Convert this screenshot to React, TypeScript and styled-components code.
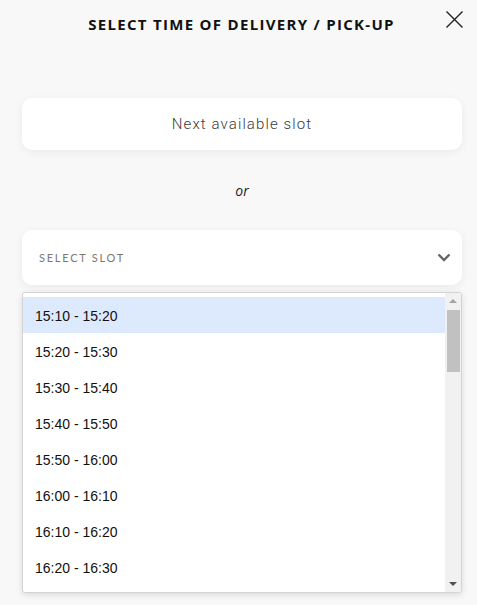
import React from 'react';
import styled, { createGlobalStyle } from 'styled-components';

const GlobalStyle = createGlobalStyle`
  html, body {
    margin: 0;
    padding: 0;
    background: #f8f8f8;
  }
  * {
    box-sizing: border-box;
  }
`;

const Page = styled.div`
  width: 477px;
  height: 605px;
  padding: 0 15px 0 22px;
  font-family: 'Open Sans', 'Liberation Sans', sans-serif;
  overflow: hidden;
`;

const Header = styled.header`
  position: relative;
  height: 46px;
  display: flex;
  align-items: center;
  justify-content: center;
  padding-right: 1px;
  padding-top: 1px;
`;

const Title = styled.h1`
  margin: 0;
  font-family: 'Open Sans', sans-serif;
  font-size: 15px;
  font-weight: 700;
  letter-spacing: 1.3px;
  color: #111;
  text-transform: uppercase;
`;

const CloseButton = styled.button`
  position: absolute;
  right: -2px;
  top: 10px;
  width: 19px;
  height: 19px;
  padding: 0;
  border: none;
  background: none;
  cursor: pointer;
  display: flex;
`;

const Content = styled.main`
  width: 440px;
  padding-top: 52px;
  display: flex;
  flex-direction: column;
`;

const Card = styled.div`
  background: #fff;
  border-radius: 10px;
  box-shadow: 0 2px 10px rgba(0, 0, 0, 0.06);
`;

const NextSlot = styled(Card)`
  height: 52px;
  display: flex;
  align-items: center;
  justify-content: center;
  font-family: Roboto, sans-serif;
  font-weight: 300;
  font-size: 15px;
  letter-spacing: 1.1px;
  color: #3a3a3a;
`;

const Or = styled.div`
  height: 80px;
  display: flex;
  align-items: center;
  justify-content: center;
  font-family: 'Open Sans', sans-serif;
  font-style: italic;
  font-size: 14px;
  color: #222;
`;

const SelectBox = styled(Card)`
  height: 55px;
  display: flex;
  align-items: center;
  justify-content: space-between;
  padding: 0 11px 0 17px;
`;

const SelectLabel = styled.span`
  font-family: Lato, sans-serif;
  font-size: 11px;
  letter-spacing: 1.75px;
  color: #7d7772;
  text-transform: uppercase;
`;

const ListBox = styled.div`
  margin-top: 7px;
  height: 301px;
  background: #fff;
  border: 1px solid #d4d4d4;
  border-radius: 3px;
  box-shadow: 0 2px 6px rgba(0, 0, 0, 0.12);
  display: flex;
  overflow: hidden;
`;

const Options = styled.ul`
  flex: 1;
  list-style: none;
  margin: 0;
  padding: 4px 0 0;
  overflow: hidden;
`;

const Option = styled.li<{ $active?: boolean }>`
  height: 36px;
  display: flex;
  align-items: center;
  padding: 2px 0 0 12px;
  font-family: 'Liberation Sans', Arial, sans-serif;
  font-size: 14px;
  color: #111;
  background: ${(p) => (p.$active ? '#dde9fc' : 'transparent')};
`;

const Scrollbar = styled.div`
  width: 16px;
  background: #f1f1f1;
  display: flex;
  flex-direction: column;
  align-items: center;
`;

const ArrowButton = styled.div`
  height: 16px;
  width: 100%;
  display: flex;
  align-items: center;
  justify-content: center;
`;

const Thumb = styled.div`
  width: 13px;
  height: 62px;
  margin-top: 1px;
  background: #c1c1c1;
`;

const Track = styled.div`
  flex: 1;
`;

const slots = [
  '15:10 - 15:20',
  '15:20 - 15:30',
  '15:30 - 15:40',
  '15:40 - 15:50',
  '15:50 - 16:00',
  '16:00 - 16:10',
  '16:10 - 16:20',
  '16:20 - 16:30',
];

const Triangle = ({ up }: { up?: boolean }) => (
  <svg width="8" height="4" viewBox="0 0 8 4">
    <path d={up ? 'M0 4 L4 0 L8 4 Z' : 'M0 0 L8 0 L4 4 Z'} fill={up ? '#a3a3a3' : '#505050'} />
  </svg>
);

export default function App() {
  return (
    <Page>
      <GlobalStyle />
      <Header>
        <Title>Select time of delivery / pick-up</Title>
        <CloseButton aria-label="Close">
          <svg width="19" height="19" viewBox="0 0 19 19">
            <path d="M1.5 1.5 L17.5 17.5 M17.5 1.5 L1.5 17.5" stroke="#222" strokeWidth="1.4" />
          </svg>
        </CloseButton>
      </Header>
      <Content>
        <NextSlot>Next available slot</NextSlot>
        <Or>or</Or>
        <SelectBox>
          <SelectLabel>Select slot</SelectLabel>
          <svg width="14" height="9" viewBox="0 0 14 9">
            <path d="M1.5 1.5 L7 7 L12.5 1.5" fill="none" stroke="#666" strokeWidth="2.4" />
          </svg>
        </SelectBox>
        <ListBox>
          <Options>
            {slots.map((s, i) => (
              <Option key={s} $active={i === 0}>
                {s}
              </Option>
            ))}
          </Options>
          <Scrollbar>
            <ArrowButton>
              <Triangle up />
            </ArrowButton>
            <Thumb />
            <Track />
            <ArrowButton>
              <Triangle />
            </ArrowButton>
          </Scrollbar>
        </ListBox>
      </Content>
    </Page>
  );
}
